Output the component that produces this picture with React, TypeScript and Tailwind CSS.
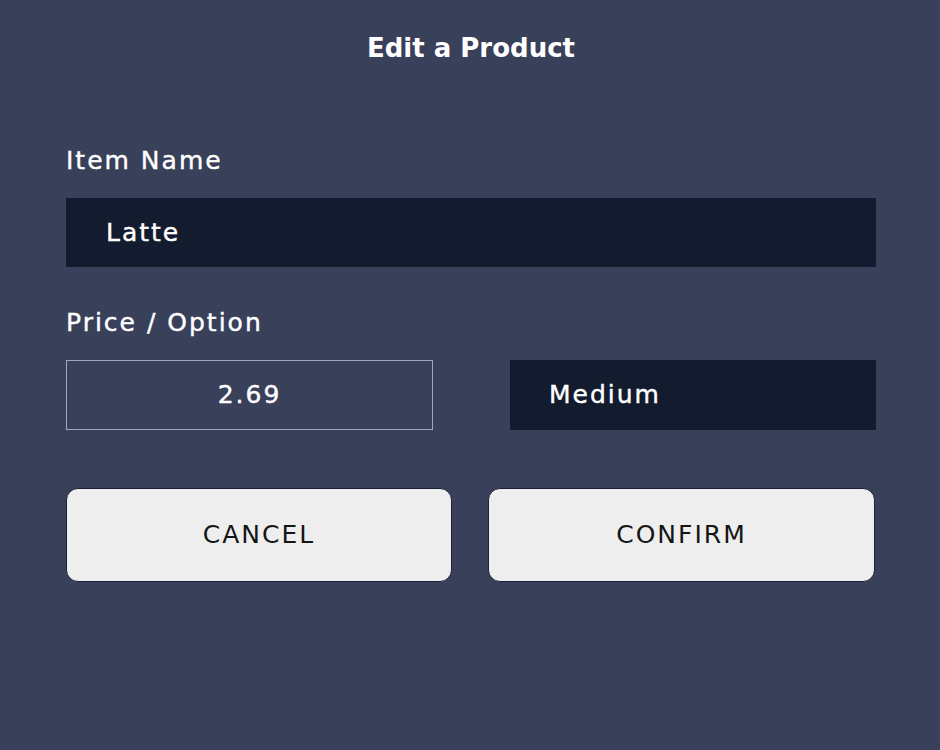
export default function App() {
  return (
    <div
      className="w-[940px] h-[750px] bg-[#38405a] text-white"
      style={{ fontFamily: '"DejaVu Sans", "Open Sans", sans-serif' }}
    >
      <div className="pt-[33px] text-center">
        <h1 className="text-[26px] font-bold leading-[30px] pl-[2px]">Edit a Product</h1>
      </div>

      <div className="pl-[66px] pr-[64px] pt-[84px]">
        {/* Item name */}
        <label className="block text-[25px] leading-[28px] tracking-[2px] mb-[23px] [-webkit-text-stroke:0.4px_white]">
          Item Name
        </label>
        <div className="h-[69px] bg-[#131b2e] flex items-center pl-[40px] text-[25px] tracking-[2px] [-webkit-text-stroke:0.4px_white]">
          Latte
        </div>

        {/* Price / option */}
        <label className="block mt-[42px] text-[25px] leading-[28px] tracking-[2px] mb-[23px] [-webkit-text-stroke:0.4px_white]">
          Price / Option
        </label>
        <div className="flex justify-between">
          <div className="w-[367px] h-[70px] border border-[#a3a8b8] flex items-center justify-center text-[25px] tracking-[2px] [-webkit-text-stroke:0.4px_white]">
            2.69
          </div>
          <div className="w-[366px] h-[70px] bg-[#131b2e] flex items-center pl-[39px] text-[25px] tracking-[2px] [-webkit-text-stroke:0.4px_white]">
            Medium
          </div>
        </div>

        {/* Actions */}
        <div className="flex justify-between mt-[58px] pr-[1px]">
          <button className="w-[386px] h-[94px] rounded-[12px] border border-[#1a2036] bg-[#eeeeee] text-[#151515] text-[25px] tracking-[2px]">
            CANCEL
          </button>
          <button className="w-[387px] h-[94px] rounded-[12px] border border-[#1a2036] bg-[#eeeeee] text-[#151515] text-[25px] tracking-[2px]">
            CONFIRM
          </button>
        </div>
      </div>
    </div>
  );
}
